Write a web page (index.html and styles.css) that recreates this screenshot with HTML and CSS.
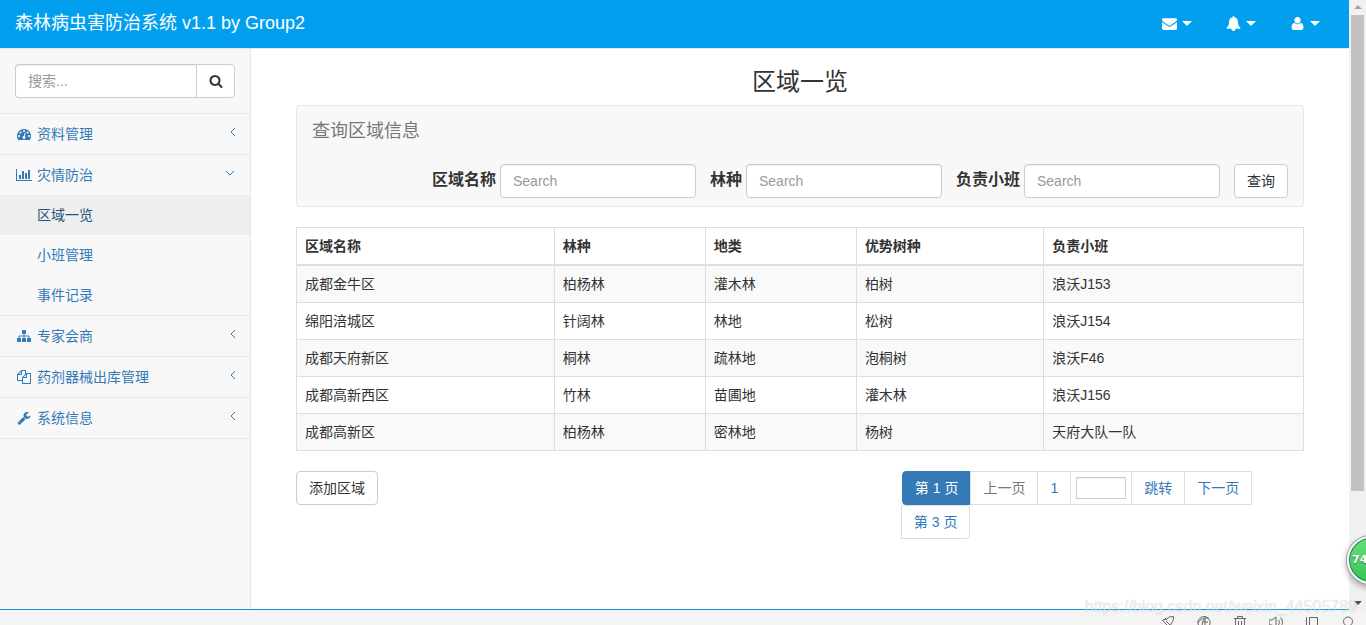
FILE: index.html
```html
<!DOCTYPE html>
<html lang="zh-CN">
<head>
<meta charset="utf-8">
<title>森林病虫害防治系统</title>
<link rel="stylesheet" href="styles.css">
</head>
<body>
<div class="window">
  <div class="viewport">
    <div class="page">
      <header class="navbar">
        <a class="brand" href="#">森林病虫害防治系统 v1.1 by Group2</a>
        <nav class="top-links" aria-label="快捷菜单">
          <a class="top-link" href="#" aria-label="消息">
            <svg class="icon icon-top" viewBox="0 0 1792 1792"><path d="M1792 710v794q0 66-47 113t-113 47h-1472q-66 0-113-47t-47-113v-794q44 49 101 87 362 246 497 345 57 42 92.5 65.5t94.5 48 110 24.5h2q51 0 110-24.5t94.5-48 92.5-65.5q170-123 498-345 57-39 100-87zm0-294q0 79-49 151t-122 123q-376 261-468 325-10 7-42.5 31t-54 38.5-52 32.5-57.5 27-50 9h-2q-23 0-50-9t-57.5-27-52-32.5-54-38.5-42.5-31q-91-64-262-182.5t-205-142.5q-62-42-117-115.5t-55-136.5q0-78 41.5-130t118.5-52h1472q65 0 112.5 47t47.5 113z"/></svg>
            <span class="caret"></span>
          </a>
          <a class="top-link" href="#" aria-label="提醒">
            <svg class="icon icon-top" viewBox="0 0 1792 1792"><path d="M1728 1408q0 52-38 90t-90 38h-448q0 106-75 181t-181 75-181-75-75-181h-448q-52 0-90-38t-38-90q50-42 91-88t85-119.5 74.5-158.5 50-206 19.5-260q0-152 117-282.5t307-158.5q-8-19-8-39 0-40 28-68t68-28 68 28 28 68q0 20-8 39 190 28 307 158.5t117 282.5q0 139 19.5 260t50 206 74.5 158.5 85 119.5 91 88z"/></svg>
            <span class="caret"></span>
          </a>
          <a class="top-link" href="#" aria-label="用户">
            <svg class="icon icon-top" viewBox="0 0 1792 1792"><path d="M1600 1405q0 120-73 189.500t-194 69.500h-874q-121 0-194-69.500t-73-189.500q0-53 3.500-103.500t14-109 26.500-108.500 43-97.500 62-81 85.500-53.500 111.500-20q9 0 42 21.500t74.500 48 108 48 133.500 21.500 133.500-21.500 108-48 74.500-48 42-21.500q61 0 111.500 20t85.500 53.500 62 81 43 97.500 26.500 108.500 14 109 3.500 103.500zm-320-893q0 159-112.500 271.500t-271.500 112.500-271.500-112.500-112.500-271.500 112.500-271.500 271.500-112.500 271.500 112.500 112.500 271.500z"/></svg>
            <span class="caret"></span>
          </a>
        </nav>
      </header>
      <div class="body-row">
        <aside class="sidebar">
          <form class="side-search">
            <input class="side-search-input" type="text" placeholder="搜索..." aria-label="搜索">
            <button class="side-search-button" type="button" aria-label="搜索">
              <svg class="icon" viewBox="0 0 1792 1792"><path d="M1216 832q0-185-131.500-316.500t-316.500-131.500-316.500 131.500-131.500 316.500 131.500 316.500 316.500 131.500 316.500-131.500 131.500-316.500zm512 832q0 52-38 90t-90 38q-54 0-90-38l-343-342q-179 124-399 124-143 0-273.500-55.500t-225-150-150-225-55.500-273.500 55.500-273.500 150-225 225-150 273.500-55.500 273.500 55.500 225 150 150 225 55.500 273.500q0 220-124 399l343 343q37 37 37 90z"/></svg>
            </button>
          </form>
          <ul class="menu">
            <li class="menu-item">
              <a class="menu-link" href="#">
                <svg class="icon" viewBox="0 0 1792 1792"><path d="M384 1152q0-53-37.500-90.500t-90.500-37.500-90.500 37.500-37.500 90.500 37.500 90.500 90.500 37.500 90.500-37.500 37.500-90.500zm192-448q0-53-37.500-90.500t-90.500-37.500-90.500 37.500-37.500 90.500 37.500 90.500 90.500 37.500 90.500-37.500 37.500-90.500zm428 481l101-382q6-26-7.500-48.500t-38.500-29.500-48 6.500-30 39.500l-101 382q-60 5-107 43.500t-63 98.500q-20 77 20 146t117 89 146-20 89-117q16-60-6-117t-72-91zm660-33q0-53-37.500-90.500t-90.500-37.500-90.500 37.500-37.500 90.500 37.500 90.500 90.500 37.500 90.500-37.500 37.500-90.500zm-640-640q0-53-37.500-90.500t-90.500-37.500-90.500 37.500-37.500 90.500 37.500 90.500 90.500 37.500 90.500-37.500 37.500-90.500zm448 192q0-53-37.500-90.500t-90.500-37.500-90.500 37.500-37.500 90.500 37.500 90.500 90.500 37.500 90.500-37.500 37.500-90.500zm320 448q0 261-141 483-19 29-54 29h-1402q-35 0-54-29-141-221-141-483 0-182 71-348t191-286 286-191 348-71 348 71 286 191 191 286 71 348z"/></svg>
                <span class="menu-label">资料管理</span>
                <svg class="arrow" viewBox="0 0 10 10"><path d="M7 1 3 5l4 4"/></svg>
              </a>
            </li>
            <li class="menu-item">
              <a class="menu-link" href="#">
                <svg class="icon icon-wide" viewBox="0 0 2048 1792"><path d="M640 896v512h-256v-512h256zm384-512v1024h-256v-1024h256zm1024 1152v128h-2048v-1536h128v1408h1920zm-640-896v768h-256v-768h256zm384-384v1152h-256v-1152h256z"/></svg>
                <span class="menu-label">灾情防治</span>
                <svg class="arrow arrow-open" viewBox="0 0 10 10"><path d="M1 3l4 4 4-4"/></svg>
              </a>
              <ul class="submenu">
                <li><a class="submenu-link active" href="#">区域一览</a></li>
                <li><a class="submenu-link" href="#">小班管理</a></li>
                <li><a class="submenu-link" href="#">事件记录</a></li>
              </ul>
            </li>
            <li class="menu-item">
              <a class="menu-link" href="#">
                <svg class="icon" viewBox="0 0 1792 1792"><path d="M1792 1248v320q0 40-28 68t-68 28h-320q-40 0-68-28t-28-68v-320q0-40 28-68t68-28h96v-192h-512v192h96q40 0 68 28t28 68v320q0 40-28 68t-68 28h-320q-40 0-68-28t-28-68v-320q0-40 28-68t68-28h96v-192h-512v192h96q40 0 68 28t28 68v320q0 40-28 68t-68 28h-320q-40 0-68-28t-28-68v-320q0-40 28-68t68-28h96v-192q0-52 38-90t90-38h512v-192h-96q-40 0-68-28t-28-68v-320q0-40 28-68t68-28h320q40 0 68 28t28 68v320q0 40-28 68t-68 28h-96v192h512q52 0 90 38t38 90v192h96q40 0 68 28t28 68z"/></svg>
                <span class="menu-label">专家会商</span>
                <svg class="arrow" viewBox="0 0 10 10"><path d="M7 1 3 5l4 4"/></svg>
              </a>
            </li>
            <li class="menu-item">
              <a class="menu-link" href="#">
                <svg class="icon" viewBox="0 0 1792 1792"><path d="M1696 384q40 0 68 28t28 68v1216q0 40-28 68t-68 28h-960q-40 0-68-28t-28-68v-288h-544q-40 0-68-28t-28-68v-672q0-40 20-88t48-76l408-408q28-28 76-48t88-20h416q40 0 68 28t28 68v328q68-40 128-40h416zm-544 213l-299 299h299v-299zm-640-384l-299 299h299v-299zm196 647l316-316v-416h-384v416q0 40-28 68t-68 28h-416v640h512v-256q0-40 20-88t48-76zm956 804v-1152h-384v416q0 40-28 68t-68 28h-416v640h896z"/></svg>
                <span class="menu-label">药剂器械出库管理</span>
                <svg class="arrow" viewBox="0 0 10 10"><path d="M7 1 3 5l4 4"/></svg>
              </a>
            </li>
            <li class="menu-item">
              <a class="menu-link" href="#">
                <svg class="icon" viewBox="0 0 1792 1792"><path d="M448 1472q0-26-19-45t-45-19-45 19-19 45 19 45 45 19 45-19 19-45zm644-420l-682 682q-37 37-90 37-52 0-91-37l-106-108q-38-36-38-90 0-53 38-91l681-681q39 98 114.500 173.500t173.500 114.500zm634-435q0 39-23 106-47 134-164.500 217.500t-258.500 83.500q-185 0-316.500-131.500t-131.500-316.500 131.500-316.500 316.500-131.500q58 0 121.500 16.500t107.500 46.500q16 11 16 28t-16 28l-293 169v224l193 107q5-3 79-48.500t135.500-81 70.500-35.500q15 0 23.500 10t8.500 25z"/></svg>
                <span class="menu-label">系统信息</span>
                <svg class="arrow" viewBox="0 0 10 10"><path d="M7 1 3 5l4 4"/></svg>
              </a>
            </li>
          </ul>
        </aside>
        <main class="content">
          <h1 class="title">区域一览</h1>
          <section class="panel">
            <h2 class="panel-title">查询区域信息</h2>
            <form class="query">
              <div class="field">
                <label class="field-label" for="area">区域名称</label>
                <input class="field-input" id="area" type="text" placeholder="Search">
              </div>
              <div class="field">
                <label class="field-label" for="kind">林种</label>
                <input class="field-input" id="kind" type="text" placeholder="Search">
              </div>
              <div class="field">
                <label class="field-label" for="group">负责小班</label>
                <input class="field-input" id="group" type="text" placeholder="Search">
              </div>
              <button class="button" type="button">查询</button>
            </form>
          </section>
          <table class="areas">
            <colgroup><col class="col-area"><col class="col-kind"><col class="col-land"><col class="col-tree"><col class="col-group"></colgroup>
            <thead>
              <tr><th>区域名称</th><th>林种</th><th>地类</th><th>优势树种</th><th>负责小班</th></tr>
            </thead>
            <tbody>
              <tr><td>成都金牛区</td><td>柏杨林</td><td>灌木林</td><td>柏树</td><td>浪沃J153</td></tr>
              <tr><td>绵阳涪城区</td><td>针阔林</td><td>林地</td><td>松树</td><td>浪沃J154</td></tr>
              <tr><td>成都天府新区</td><td>桐林</td><td>疏林地</td><td>泡桐树</td><td>浪沃F46</td></tr>
              <tr><td>成都高新西区</td><td>竹林</td><td>苗圃地</td><td>灌木林</td><td>浪沃J156</td></tr>
              <tr><td>成都高新区</td><td>柏杨林</td><td>密林地</td><td>杨树</td><td>天府大队一队</td></tr>
            </tbody>
          </table>
          <div class="table-footer">
            <button class="button" type="button">添加区域</button>
            <ul class="pagination">
              <li class="page-cell current"><a class="page-link" href="#">第 1 页</a></li>
              <li class="page-cell disabled"><a class="page-link" href="#">上一页</a></li>
              <li class="page-cell"><a class="page-link" href="#">1</a></li>
              <li class="page-cell jump"><input class="page-input" type="text" aria-label="页码"></li>
              <li class="page-cell"><a class="page-link" href="#">跳转</a></li>
              <li class="page-cell"><a class="page-link" href="#">下一页</a></li>
              <li class="page-cell"><a class="page-link" href="#">第 3 页</a></li>
            </ul>
          </div>
        </main>
      </div>
    </div>
    <div class="scrollbar">
      <svg class="scroll-arrow scroll-up" viewBox="0 0 8 4"><path d="M0 4 4 0l4 4z"/></svg>
      <div class="scroll-track"><div class="scroll-thumb"></div></div>
      <svg class="scroll-arrow scroll-down" viewBox="0 0 8 4"><path d="M0 0h8L4 4z"/></svg>
    </div>
  </div>
  <footer class="status">
    <svg class="status-icon" viewBox="0 0 14 14"><path d="M12.500 1.500Q8 1 5.500 4L1.500 5 4 8l3 3 2 2 1-4Q13 6 12.500 1.500zM4 3l2 2M5 6l4 4M3 10l-2 3"/></svg>
    <svg class="status-icon" viewBox="0 0 14 14"><path d="M2 11A6 6 0 1 1 12 11M1 8Q4 2 12 3M5 12Q4 6 9 2M6 7h5M8 4v6"/></svg>
    <svg class="status-icon" viewBox="0 0 14 14"><path d="M1 3.500h12M4.500 3V1.500h5V3M2.500 4v10h9V4M5.500 6v6M8.500 6v6"/></svg>
    <svg class="status-icon" viewBox="0 0 14 14"><path d="M0 5h3l4-3v11l-4-3H0zM9.500 5q2 2 0 5M11.500 2.500q4 5 0 9"/></svg>
    <svg class="status-icon" viewBox="0 0 14 14"><path d="M1.500 2v12M4.500 2.500h8v11h-8z"/></svg>
    <svg class="status-icon" viewBox="0 0 14 14"><circle cx="7" cy="6.500" r="4.500"/><path d="M10 10l3 3"/></svg>
  </footer>
  <div class="speed-ball"><span class="speed-value">74</span></div>
  <div class="watermark">https://blog.csdn.net/weixin_44505789</div>
</div>
</body>
</html>
```
FILE: styles.css
```css
* {
  box-sizing: border-box;
}

body {
  margin: 0;
  font: 14px/20px "Liberation Sans", "Noto Sans CJK SC", sans-serif;
  color: #333;
  background: #fff;
}

h1,
h2,
ul {
  margin: 0;
  padding: 0;
  font-weight: 400;
  list-style: none;
}

a {
  color: #337ab7;
  text-decoration: none;
}

input,
button {
  margin: 0;
  font: inherit;
  color: #333;
}

input::placeholder {
  color: #999;
  opacity: 1;
}

.window {
  position: relative;
  display: flex;
  flex-direction: column;
  height: 100vh;
  overflow: hidden;
}

.viewport {
  display: flex;
  flex: 1;
  min-height: 0;
}

.page {
  display: flex;
  flex: 1;
  flex-direction: column;
  border-bottom: 1px solid #1296db;
}

.icon {
  width: 14px;
  height: 14px;
  fill: currentColor;
}

.icon-wide {
  width: 16px;
  margin: 0 -1px;
}

.icon-top {
  width: 15px;
  height: 15px;
}

/* Header */

.navbar {
  display: flex;
  justify-content: space-between;
  align-items: center;
  padding: 0 15px;
  background: #029fee;
  border-bottom: 1px solid #e7e7e7;
}

.brand {
  padding: 11px 0 13px;
  font-size: 18px;
  line-height: 24px;
  color: #fff;
}

.top-links {
  display: flex;
  gap: 6px;
}

.top-link {
  display: flex;
  align-items: center;
  gap: 5px;
  padding: 13px 14px 15px;
  line-height: 20px;
  color: #fff;
}

.caret {
  border: 5px solid transparent;
  border-top-color: #fff;
  border-bottom: 0;
}

/* Sidebar */

.body-row {
  display: flex;
  flex: 1;
}

.sidebar {
  flex: none;
  width: 251px;
  background: #f8f8f8;
  border-right: 1px solid #e7e7e7;
}

.side-search {
  display: flex;
  padding: 15px;
  border-bottom: 1px solid #e7e7e7;
}

.side-search-input {
  flex: 1;
  min-width: 0;
  height: 34px;
  padding: 6px 12px;
  border: 1px solid #ccc;
  border-right: 0;
  border-radius: 4px 0 0 4px;
  box-shadow: inset 0 1px 1px rgba(0, 0, 0, 0.075);
}

.side-search-button {
  display: flex;
  align-items: center;
  justify-content: center;
  width: 39px;
  padding: 0;
  background: #fff;
  border: 1px solid #ccc;
  border-radius: 0 4px 4px 0;
}

.menu-item {
  border-bottom: 1px solid #e7e7e7;
}

.menu-link {
  display: flex;
  align-items: center;
  gap: 6px;
  padding: 10px 12px 10px 17px;
}

.menu-label {
  flex: 1;
}

.arrow {
  align-self: flex-start;
  width: 10px;
  height: 10px;
  margin-top: 3px;
  fill: none;
  stroke: currentColor;
}

.arrow-open {
  margin-right: 3px;
}

.submenu-link {
  display: block;
  padding: 10px 37px;
}

.submenu-link.active {
  color: #23527c;
  background: #eee;
}

/* Content */

.content {
  flex: 1;
  padding: 20px 45px;
}

.title {
  margin-bottom: 10px;
  font-size: 24px;
  line-height: 26px;
  text-align: center;
}

.panel {
  padding: 15px 15px 8px;
  margin-bottom: 20px;
  background: #f8f8f8;
  border: 1px solid #e7e7e7;
  border-radius: 4px;
}

.panel-title {
  margin-bottom: 23px;
  font-size: 18px;
  line-height: 20px;
  color: #777;
}

.query {
  display: flex;
  justify-content: flex-end;
  gap: 14px;
}

.field {
  display: flex;
  gap: 4px;
}

.field-label {
  padding-top: 6px;
  font-size: 16px;
  font-weight: 700;
}

.field-input {
  width: 196px;
  height: 34px;
  padding: 6px 12px;
  border: 1px solid #ccc;
  border-radius: 4px;
  box-shadow: inset 0 1px 1px rgba(0, 0, 0, 0.075);
}

.button {
  height: 34px;
  padding: 6px 12px;
  background: #fff;
  border: 1px solid #ccc;
  border-radius: 4px;
}

.areas {
  width: 100%;
  margin-bottom: 20px;
  table-layout: fixed;
  border-collapse: collapse;
}

.col-area {
  width: 25.6%;
}

.col-kind,
.col-land {
  width: 15%;
}

.col-tree {
  width: 18.6%;
}

.areas th,
.areas td {
  padding: 8px;
  text-align: left;
  border: 1px solid #ddd;
}

.areas th {
  border-bottom-width: 2px;
}

.areas tbody tr:nth-child(odd) {
  background: #f9f9f9;
}

.table-footer {
  display: flex;
  justify-content: space-between;
  align-items: flex-start;
}

.pagination {
  display: flex;
  flex-wrap: wrap;
  width: 40%;
  padding-left: 1px;
}

.page-cell {
  height: 34px;
  margin-left: -1px;
  background: #fff;
  border: 1px solid #ddd;
}

.page-cell:first-child {
  margin-left: 0;
  border-radius: 4px 0 0 4px;
}

.page-cell:last-child {
  border-radius: 0 4px 4px 0;
}

.page-link {
  display: block;
  padding: 6px 12px;
}

.page-cell.current {
  background: #337ab7;
  border-color: #337ab7;
}

.current .page-link {
  color: #fff;
}

.disabled .page-link {
  color: #777;
}

.jump {
  padding: 5px;
}

.page-input {
  display: block;
  width: 50px;
  height: 22px;
  border: 1px solid #ccc;
  box-shadow: inset 0 1px 1px rgba(0, 0, 0, 0.075);
}

/* Window chrome */

.scrollbar {
  display: flex;
  flex: none;
  flex-direction: column;
  align-items: center;
  width: 17px;
  padding: 5px 0;
  background: #f1f1f1;
}

.scroll-arrow {
  width: 8px;
  height: 4px;
  fill: #a3a3a3;
}

.scroll-down {
  fill: #505050;
}

.scroll-track {
  flex: 1;
  width: 13px;
  padding: 6px 0;
}

.scroll-thumb {
  height: 82%;
  background: #c1c1c1;
}

.status {
  display: flex;
  justify-content: flex-end;
  gap: 22px;
  height: 15px;
  padding: 5px 11px 0 0;
  overflow: hidden;
  background: #f4f4f4;
}

.status-icon {
  flex: none;
  width: 14px;
  height: 14px;
  fill: none;
  stroke: #666;
}

.speed-ball {
  position: absolute;
  right: -29px;
  bottom: 41px;
  width: 48px;
  height: 48px;
  padding: 10px 0 0 3px;
  background: linear-gradient(#6fdc7d, #35c453);
  border: 2px solid #f4f4f4;
  border-radius: 50%;
  box-shadow: 0 0 0 1px #999, inset 0 0 0 1px #16804a, 0 3px 7px rgba(0, 0, 0, 0.4);
}

.speed-value {
  font: 700 11px/20px "DejaVu Sans", sans-serif;
  color: #fff;
  text-shadow: 0 1px 1px #237a38;
}

.watermark {
  position: absolute;
  right: 9px;
  bottom: 8px;
  font-size: 16px;
  color: rgba(255, 255, 255, 0.6);
  text-shadow: 0 0 1px rgba(0, 0, 0, 0.2);
}
```
